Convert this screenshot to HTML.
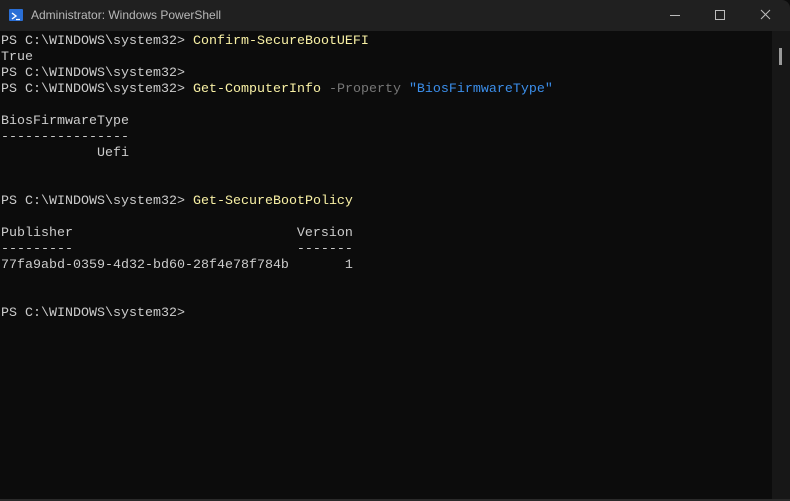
<!DOCTYPE html>
<html><head><style>
html,body{margin:0;padding:0;background:#0c0c0c;}
.win{position:relative;width:790px;height:501px;background:#0c0c0c;overflow:hidden;border-radius:0 8px 0 0;}
.title{position:absolute;left:0;top:0;width:790px;height:31px;background:#202020;}
.title .t{position:absolute;left:31px;top:8px;font:12px "Liberation Sans",sans-serif;color:#b8b8b8;}
.icon{position:absolute;left:9px;top:9px;width:14px;height:12px;background:#2a6fd6;border-radius:1px;}
.sb{position:absolute;left:772px;top:31px;width:18px;height:470px;background:#171717;}
.thumb{position:absolute;left:779px;top:48px;width:3px;height:17px;background:#9a9a9a;}
pre{position:absolute;left:1px;top:34px;margin:0;font:13.33px/16px "Liberation Mono",monospace;color:#cccccc;}
.y{color:#f9f1a5}.g{color:#767676}.b{color:#3b8eea}
.bottom{position:absolute;left:0;top:499px;width:790px;height:2px;background:#2a2a2a;}
</style></head><body><div class="win">
<div class="title"><div class="icon"><svg width="14" height="12" viewBox="0 0 14 12"><path d="M3 3l4 3-4 3" stroke="#fff" stroke-width="1.4" fill="none"/><path d="M7 9.5h4" stroke="#fff" stroke-width="1.2"/></svg></div><div class="t">Administrator: Windows PowerShell</div>
<svg style="position:absolute;left:660px;top:8px" width="130" height="16"><path d="M10 7.5h10" stroke="#bbb" stroke-width="1"/><rect x="55.5" y="2.5" width="9" height="9" stroke="#bbb" fill="none"/><path d="M101 2l9 9M110 2l-9 9" stroke="#bbb" stroke-width="1"/></svg>
</div>
<div class="sb"></div><div class="thumb"></div>
<pre>PS C:\WINDOWS\system32&gt; <span class="y">Confirm-SecureBootUEFI</span>
True
PS C:\WINDOWS\system32&gt;
PS C:\WINDOWS\system32&gt; <span class="y">Get-ComputerInfo</span> <span class="g">-Property</span> <span class="b">"BiosFirmwareType"</span>

BiosFirmwareType
----------------
            Uefi


PS C:\WINDOWS\system32&gt; <span class="y">Get-SecureBootPolicy</span>

Publisher                            Version
---------                            -------
77fa9abd-0359-4d32-bd60-28f4e78f784b       1


PS C:\WINDOWS\system32&gt;</pre>
<div class="bottom"></div>
</div></body></html>
